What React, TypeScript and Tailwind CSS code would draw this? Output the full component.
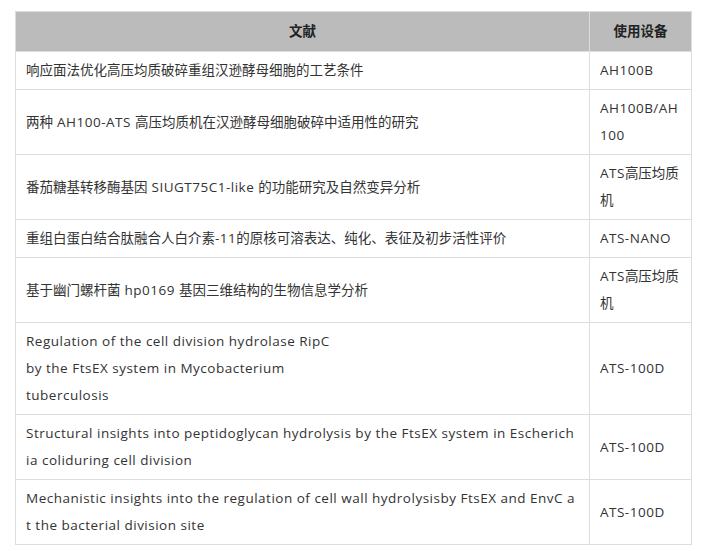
const rows: { title: string[]; device: string[] }[] = [
  { title: ["响应面法优化高压均质破碎重组汉逊酵母细胞的工艺条件"], device: ["AH100B"] },
  { title: ["两种 AH100-ATS 高压均质机在汉逊酵母细胞破碎中适用性的研究"], device: ["AH100B/AH", "100"] },
  { title: ["番茄糖基转移酶基因 SIUGT75C1-like 的功能研究及自然变异分析"], device: ["ATS高压均质", "机"] },
  { title: ["重组白蛋白结合肽融合人白介素-11的原核可溶表达、纯化、表征及初步活性评价"], device: ["ATS-NANO"] },
  { title: ["基于幽门螺杆菌 hp0169 基因三维结构的生物信息学分析"], device: ["ATS高压均质", "机"] },
  {
    title: [
      "Regulation of the cell division hydrolase RipC",
      "by the FtsEX system in Mycobacterium",
      "tuberculosis",
    ],
    device: ["ATS-100D"],
  },
  {
    title: [
      "Structural insights into peptidoglycan hydrolysis by the FtsEX system in Escherich",
      "ia coliduring cell division",
    ],
    device: ["ATS-100D"],
  },
  {
    title: [
      "Mechanistic insights into the regulation of cell wall hydrolysisby FtsEX and EnvC a",
      "t the bacterial division site",
    ],
    device: ["ATS-100D"],
  },
];

// latin runs get a little tracking, the CJK ones don't
function Mixed({ text }: { text: string }) {
  const parts = text.split(/([\u3000-\u9fff\uff00-\uffef]+)/).filter(Boolean);
  return (
    <>
      {parts.map((p, i) =>
        /[\u3000-\u9fff\uff00-\uffef]/.test(p) ? (
          <span key={i}>{p}</span>
        ) : (
          <span key={i} className="tracking-[0.5px]">
            {p}
          </span>
        )
      )}
    </>
  );
}

function Lines({ lines }: { lines: string[] }) {
  return (
    <>
      {lines.map((l, i) => (
        <div key={i} className="whitespace-nowrap">
          <Mixed text={l} />
        </div>
      ))}
    </>
  );
}

export default function App() {
  return (
    <div
      className="min-h-[551px] w-[707px] bg-white pt-[11px] pl-[15px] text-[13.5px] leading-[27px] text-[#333]"
      style={{ fontFamily: '"Open Sans", "Noto Sans CJK SC", sans-serif' }}
    >
      <table className="w-[676px] table-fixed border-collapse">
        <colgroup>
          <col className="w-[574px]" />
          <col className="w-[102px]" />
        </colgroup>
        <thead>
          <tr className="bg-[#bbbbbb]">
            <th className="border border-[#dddddd] px-[10px] py-[6px] text-center font-bold text-[#222]">文献</th>
            <th className="border border-[#dddddd] px-[10px] py-[6px] text-center font-bold text-[#222]">使用设备</th>
          </tr>
        </thead>
        <tbody>
          {rows.map((r, i) => (
            <tr key={i}>
              <td className="border border-[#dddddd] px-[10px] py-[5px] align-middle">
                <Lines lines={r.title} />
              </td>
              <td className="border border-[#dddddd] px-[10px] py-[5px] align-middle">
                <Lines lines={r.device} />
              </td>
            </tr>
          ))}
        </tbody>
      </table>
    </div>
  );
}
